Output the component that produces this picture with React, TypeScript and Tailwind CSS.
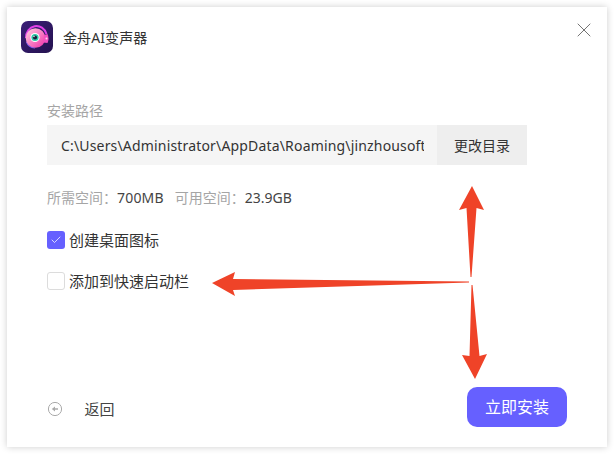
import { Check, X } from 'lucide-react';

const cjk = "font-['Noto_Sans','Noto_Sans_CJK_SC',sans-serif]";

function AppLogo() {
  return (
    <svg width="32" height="32" viewBox="0 0 32 32" className="shrink-0">
      <defs>
        <linearGradient id="logo-bg" x1="0" y1="0" x2="1" y2="1">
          <stop offset="0" stopColor="#3a1f78" />
          <stop offset="1" stopColor="#24124f" />
        </linearGradient>
        <linearGradient id="logo-eye" x1="0" y1="0" x2="1" y2="1">
          <stop offset="0" stopColor="#ffd0e0" />
          <stop offset="1" stopColor="#f02fa8" />
        </linearGradient>
      </defs>
      <rect width="32" height="32" rx="7" fill="url(#logo-bg)" />
      <path d="M5 17 A10.5 11.5 0 0 1 25.5 13" fill="none" stroke="#e040e8" strokeWidth="2" />
      <path d="M5.5 21 Q7.5 26.5 14 27" fill="none" stroke="#7d5cf0" strokeWidth="1.2" />
      <circle cx="14.5" cy="17" r="9.8" fill="url(#logo-eye)" />
      <path d="M23 14 L26.5 13 Q28.5 17.5 26.5 22 L22.5 21.5 Z" fill="#f24fc0" />
      <circle cx="25.5" cy="17.5" r="1" fill="#ffd0ea" />
      <circle cx="14" cy="16.5" r="4.6" fill="#fff" />
      <circle cx="14" cy="16.5" r="3.6" fill="#2cc9a8" />
      <circle cx="14" cy="16.5" r="2.1" fill="#14203a" />
      <circle cx="13" cy="15.5" r="0.7" fill="#fff" />
    </svg>
  );
}

function Arrows() {
  return (
    <svg width="600" height="440" viewBox="7 7 600 440" className="absolute left-0 top-0 pointer-events-none">
      <g fill="#ef4328">
        <polygon points="472,186 484,210 476.5,208 471.5,277 470.5,277 466.5,208 459,210" />
        <polygon points="212,283 235,272 233,279 469,281.5 469,282.5 233,290 235,296" />
        <polygon points="475,379 487,354 479.5,356 472.5,285 471.5,285 469.5,356 462,355" />
      </g>
    </svg>
  );
}

export default function App() {
  return (
    <div className={`w-[614px] h-[454px] bg-white p-[7px] overflow-hidden ${cjk}`}>
      <div className="relative w-[600px] h-[440px] bg-white shadow-[0_0_7px_rgba(0,0,0,0.2)] flex flex-col">
        {/* Header */}
        <div className="flex items-center pl-[14px] pt-[14px] pr-[11px]">
          <AppLogo />
          <span className="ml-[10px] mt-[1px] text-[14px] leading-[20px] tracking-[0.1px] text-[#333]">金舟AI变声器</span>
          <X size={24} strokeWidth={0.75} className="ml-auto self-start -mt-[3px] text-[#444]" />
        </div>

        {/* Install path */}
        <div className="flex flex-col flex-1 pl-[40px] pr-[40px]">
          <div className="mt-[48px] text-[14px] leading-[20px] text-[#a5a5a5]">安装路径</div>
          <div className="mt-[4px] flex h-[40px] w-[480px]">
            <div className="w-[390px] bg-[#f5f5f5] pl-[14px] pr-[13px] flex items-center">
              <span className="block overflow-hidden whitespace-nowrap text-[14px] tracking-[0.17px] text-[#333]">
                C:\Users\Administrator\AppData\Roaming\jinzhousoft
              </span>
            </div>
            <div className="w-[90px] bg-[#eeeeee] flex items-center justify-center text-[14px] text-[#333]">
              更改目录
            </div>
          </div>

          <div className="mt-[23px] flex text-[14px] leading-[20px]">
            <span className="text-[#a5a5a5]">所需空间：</span>
            <span className="text-[#444] tracking-[0.2px]">700MB</span>
            <span className="ml-[11px] text-[#a5a5a5]">可用空间：</span>
            <span className="text-[#444]">23.9GB</span>
          </div>

          {/* Options */}
          <div className="mt-[22px] flex items-center h-[20px]">
            <div className="w-[18px] h-[18px] rounded-[3px] bg-[#6660ff] flex items-center justify-center">
              <Check size={12} strokeWidth={1.5} className="text-white" />
            </div>
            <span className="ml-[4px] text-[15px] text-[#333]">创建桌面图标</span>
          </div>
          <div className="mt-[21px] flex items-center h-[20px]">
            <div className="w-[18px] h-[18px] rounded-[3px] bg-white border border-[#dcdcdc]" />
            <span className="ml-[4px] text-[15px] text-[#333]">添加到快速启动栏</span>
          </div>

          {/* Footer */}
          <div className="mt-auto mb-[20px] flex items-center justify-between">
            <div className="flex items-center mt-[4px]">
              <svg width="16" height="16" viewBox="0 0 16 16" className="-ml-[0.5px]">
                <circle cx="8" cy="8" r="6.6" fill="none" stroke="#aaa" strokeWidth="1" />
                <path d="M4.8 8 L8 5.6 V7.2 H11 V8.8 H8 V10.4 Z" fill="#aaa" />
              </svg>
              <span className="ml-[22px] text-[15px] text-[#444]">返回</span>
            </div>
            <button className="w-[100px] h-[40px] rounded-[10px] bg-[#6660ff] text-white text-[16px]">
              立即安装
            </button>
          </div>
        </div>

        <Arrows />
      </div>
    </div>
  );
}
